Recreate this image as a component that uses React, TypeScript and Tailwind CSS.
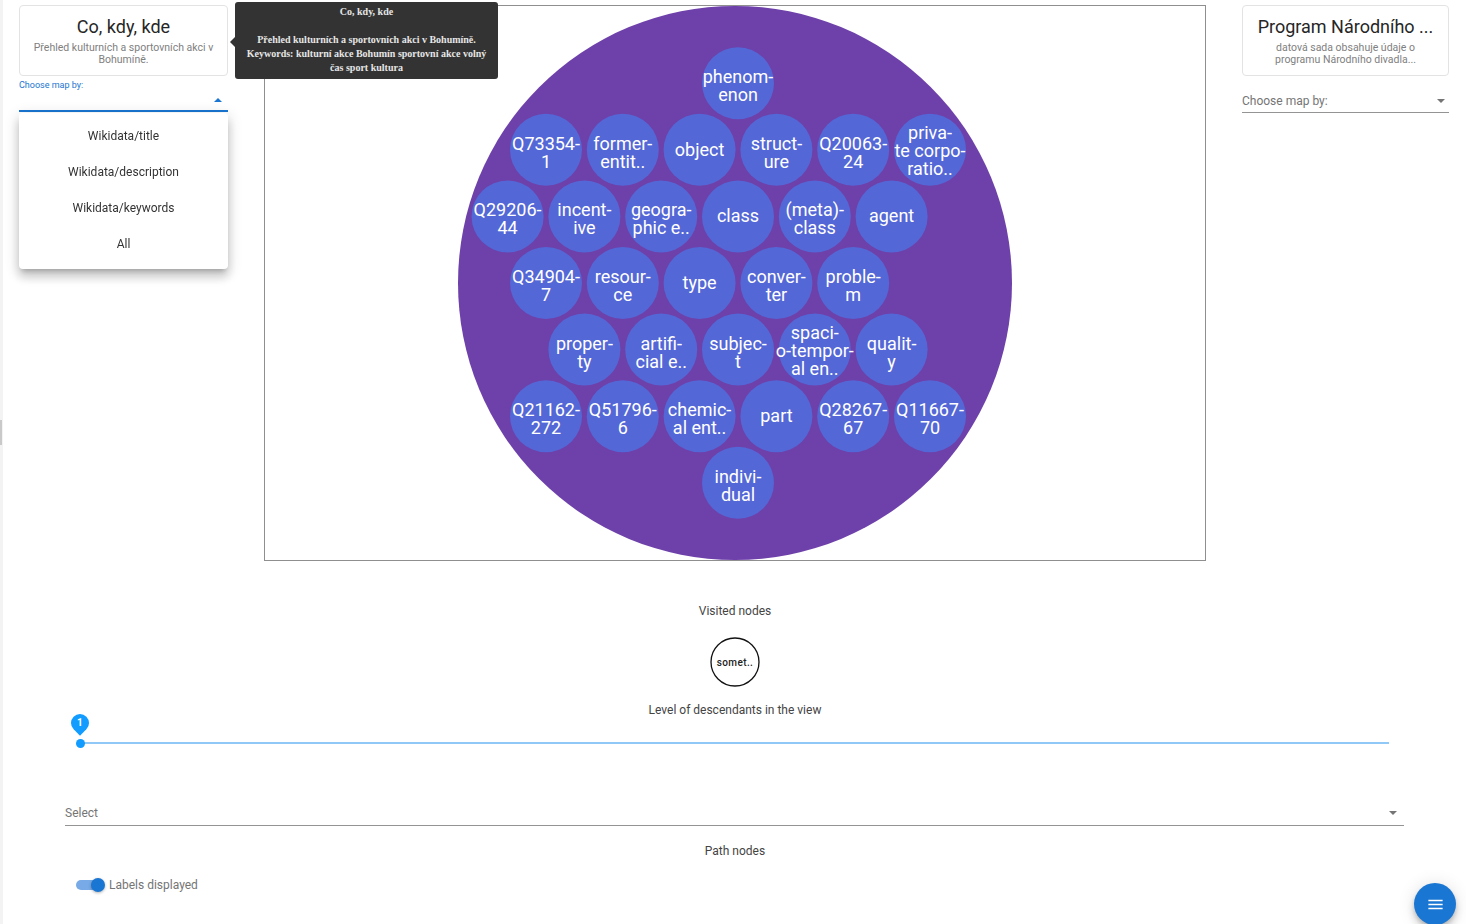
import { MdMenu } from "react-icons/md";

// bubble grid, in svg coords of the graph box (inner origin = page 265,6)
const DX = 76.8;
const DY = 66.6;
const CX = 473;
const CY = 277;

const bubbles: [number, number, string[]][] = [
  [0, -3, ["phenom-", "enon"]],
  [-2.5, -2, ["Q73354-", "1"]],
  [-1.5, -2, ["former-", "entit.."]],
  [-0.5, -2, ["object"]],
  [0.5, -2, ["struct-", "ure"]],
  [1.5, -2, ["Q20063-", "24"]],
  [2.5, -2, ["priva-", "te corpo-", "ratio.."]],
  [-3, -1, ["Q29206-", "44"]],
  [-2, -1, ["incent-", "ive"]],
  [-1, -1, ["geogra-", "phic e.."]],
  [0, -1, ["class"]],
  [1, -1, ["(meta)-", "class"]],
  [2, -1, ["agent"]],
  [-2.5, 0, ["Q34904-", "7"]],
  [-1.5, 0, ["resour-", "ce"]],
  [-0.5, 0, ["type"]],
  [0.5, 0, ["conver-", "ter"]],
  [1.5, 0, ["proble-", "m"]],
  [-2, 1, ["proper-", "ty"]],
  [-1, 1, ["artifi-", "cial e.."]],
  [0, 1, ["subjec-", "t"]],
  [1, 1, ["spaci-", "o-tempor-", "al en.."]],
  [2, 1, ["qualit-", "y"]],
  [-2.5, 2, ["Q21162-", "272"]],
  [-1.5, 2, ["Q51796-", "6"]],
  [-0.5, 2, ["chemic-", "al ent.."]],
  [0.5, 2, ["part"]],
  [1.5, 2, ["Q28267-", "67"]],
  [2.5, 2, ["Q11667-", "70"]],
  [0, 3, ["indivi-", "dual"]],
];

function BubbleChart() {
  return (
    <svg width="940" height="554" viewBox="0 0 940 554" className="block">
      <circle cx="470" cy="277" r="277" fill="#6e40aa" />
      {bubbles.map(([c, r, lines], idx) => {
        const cx = CX + c * DX;
        const cy = CY + r * DY;
        const n = lines.length;
        const shift = n === 2 ? 3 : n === 3 ? 1 : 0;
        return (
          <g key={idx}>
            <circle cx={cx} cy={cy} r="36" fill="#5467d6" />
            {lines.map((l, i) => (
              <text
                key={i}
                x={cx}
                y={cy + (i - (n - 1) / 2) * 18 + shift + 6}
                textAnchor="middle"
                fontFamily="Roboto, sans-serif"
                fontSize="18"
                fill="#ffffff"
              >
                {l}
              </text>
            ))}
          </g>
        );
      })}
    </svg>
  );
}

function DatasetCard({ title, desc }: { title: string; desc: string[] }) {
  return (
    <div className="h-[71px] rounded border border-[#e3e3e3] pt-[9px] text-center">
      <div className="truncate px-2 text-[18px] leading-[24px] text-[#262626]">{title}</div>
      <div className="mt-[3px] whitespace-nowrap text-[10.5px] leading-[12px] text-[#808080]">
        {desc.map((d) => (
          <div key={d}>{d}</div>
        ))}
      </div>
    </div>
  );
}

function Caret({ up, color }: { up?: boolean; color: string }) {
  return (
    <svg width="8" height="4" viewBox="0 0 8 4" className="block">
      <polygon points={up ? "0,4 8,4 4,0" : "0,0 8,0 4,4"} fill={color} />
    </svg>
  );
}

export default function App() {
  return (
    <div className="relative min-h-screen overflow-hidden bg-white font-[Roboto,sans-serif]">
      {/* left edge strip */}
      <div className="fixed left-0 top-0 h-full w-[3px] bg-[#f3f3f3]">
        <div className="mt-[420px] h-[25px] w-[2px] bg-[#c9c9c9]" />
      </div>

      <div className="flex pl-[19px] pt-[5px]">
        {/* left column */}
        <div className="relative w-[209px]">
          <DatasetCard
            title="Co, kdy, kde"
            desc={["Přehled kulturních a sportovních akci v", "Bohumíně."]}
          />
          <div className="mt-[3px] text-[9px] leading-[12px] text-[#1976d2]">Choose map by:</div>
          <div className="flex h-[21px] items-center justify-end border-b-2 border-[#1976d2] pb-[2px] pr-[6px]">
            <Caret up color="#1976d2" />
          </div>
          <div className="absolute left-0 top-[108px] z-10 w-[209px] rounded bg-white pb-[7px] pt-[5px] text-center text-[12px] text-[#333] shadow-[0_5px_5px_-3px_rgba(0,0,0,0.2),0_8px_10px_1px_rgba(0,0,0,0.14),0_3px_14px_2px_rgba(0,0,0,0.12)]">
            {["Wikidata/title", "Wikidata/description", "Wikidata/keywords", "All"].map((t) => (
              <div key={t} className="flex h-[36px] items-center justify-center">
                {t}
              </div>
            ))}
          </div>
        </div>

        {/* graph */}
        <div className="ml-[36px] h-[556px] w-[942px] border border-[#8f8f8f]">
          <BubbleChart />
        </div>

        {/* right column */}
        <div className="ml-[36px] w-[207px]">
          <DatasetCard
            title="Program Národního ..."
            desc={["datová sada obsahuje údaje o", "programu Národního divadla..."]}
          />
          <div className="mt-[16px] flex h-[21px] items-start justify-between border-b border-[#949494] pt-[2px] pr-[4px]">
            <span className="text-[12px] leading-[14px] text-[#757575]">Choose map by:</span>
            <div className="pt-[5px]">
              <Caret color="#757575" />
            </div>
          </div>
        </div>
      </div>

      {/* tooltip */}
      <div className="absolute left-[235px] top-[2px] z-20 h-[77px] w-[263px] rounded-[3px] bg-[#333333] pt-[3px] text-center font-['Liberation_Serif',serif] text-[10px] font-bold leading-[14px] text-[#e6e6e6]">
        <div className="absolute left-[-5px] top-[35px] h-0 w-0 border-y-[5px] border-r-[5px] border-y-transparent border-r-[#333333]" />
        <div>Co, kdy, kde</div>
        <div>&nbsp;</div>
        <div>Přehled kulturních a sportovních akci v Bohumíně.</div>
        <div>Keywords: kulturní akce Bohumín sportovní akce volný</div>
        <div>čas sport kultura</div>
      </div>

      {/* lower panel */}
      <div className="mt-[42px] pl-[4px] text-center text-[12px] leading-[16px] text-[#444]">Visited nodes</div>
      <div className="mt-[18px] flex justify-center pl-[4px]">
        <svg width="50" height="50" viewBox="0 0 50 50" className="block">
          <circle cx="25" cy="25" r="24" fill="#ffffff" stroke="#111" strokeWidth="1.3" />
          <text
            x="25"
            y="28.5"
            textAnchor="middle"
            fontFamily="Roboto, sans-serif"
            fontSize="10"
            fontWeight="500"
            letterSpacing="0.4"
            fill="#222"
          >
            somet..
          </text>
        </svg>
      </div>
      <div className="mt-[15px] pl-[4px] text-center text-[12px] leading-[16px] text-[#444]">
        Level of descendants in the view
      </div>

      <div className="relative ml-[80px] mr-[77px] h-[40px]">
        <div className="absolute left-0 right-0 top-[24px] h-[2px] bg-[#90c8f8]" />
        <div className="absolute left-[-4.5px] top-[20.5px] h-[9px] w-[9px] rounded-full bg-[#129cff]" />
        <div className="absolute left-[-9px] top-[-4px] flex h-[18px] w-[18px] -rotate-45 items-center justify-center rounded-[50%_50%_50%_0] bg-[#129cff]">
          <span className="rotate-45 text-[10px] font-bold leading-none text-white">1</span>
        </div>
      </div>

      <div className="ml-[65px] mr-[62px] mt-[47px] flex items-center justify-between border-b border-[#949494] pb-[4px] pr-[7px]">
        <span className="text-[12px] leading-[16px] text-[#757575]">Select</span>
        <Caret color="#757575" />
      </div>

      <div className="mt-[17px] pl-[4px] text-center text-[12px] leading-[16px] text-[#444]">Path nodes</div>

      <div className="mt-[16px] flex h-[20px] items-center pl-[76px]">
        <div className="relative h-[10px] w-[27px] rounded-full bg-[#77aae6]">
          <div className="absolute right-[-2px] top-[-2px] h-[14px] w-[14px] rounded-full bg-[#1976d2] shadow-[0_1px_3px_rgba(0,0,0,0.3)]" />
        </div>
        <span className="ml-[6px] text-[12px] leading-[16px] text-[#757575]">Labels displayed</span>
      </div>

      <button className="fixed bottom-[-1px] right-[10px] flex h-[42px] w-[42px] items-center justify-center rounded-full bg-[#1976d2] text-white shadow-[0_3px_5px_-1px_rgba(0,0,0,0.2),0_6px_10px_0_rgba(0,0,0,0.14),0_1px_18px_0_rgba(0,0,0,0.12)]">
        <MdMenu size={19} />
      </button>
    </div>
  );
}
